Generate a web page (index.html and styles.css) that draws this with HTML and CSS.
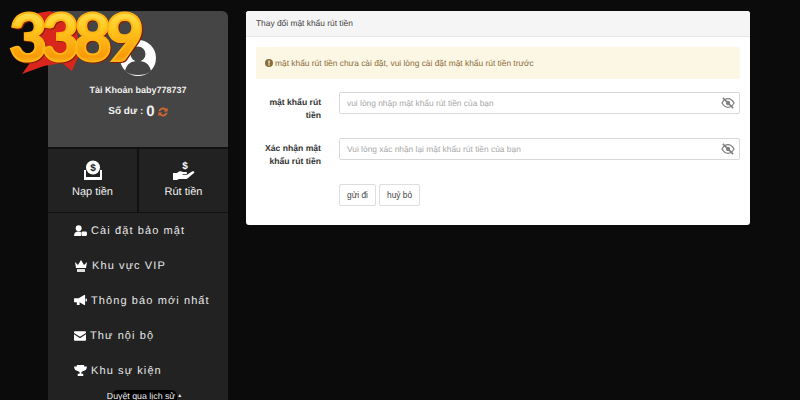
FILE: index.html
```html
<!DOCTYPE html>
<html lang="vi">
<head>
<meta charset="utf-8">
<title>Thay đổi mật khẩu rút tiền</title>
<link rel="stylesheet" href="styles.css">
</head>
<body>
<svg class="logo" viewBox="0 0 170 80" width="170" height="80" aria-hidden="true">
  <defs>
    <linearGradient id="gold" x1="0" y1="0" x2="0" y2="1">
      <stop offset="0" stop-color="#fff27a"/>
      <stop offset="0.4" stop-color="#ffc81e"/>
      <stop offset="0.75" stop-color="#f89a08"/>
      <stop offset="1" stop-color="#ffd94a"/>
    </linearGradient>
  </defs>
  <path d="M38 13 L50 11 L76 24 L80 52 L72 71 L62 63 L44 66 L22 74 L32 60 L40 30 Z" fill="#d8261c"/>
  <text x="9" y="61" class="logo-text" fill="url(#gold)">3389</text>
</svg>
<div class="page">
  <aside class="sidebar">
    <section class="profile">
      <svg class="avatar" viewBox="0 0 36 36" width="36" height="36" aria-hidden="true">
        <circle cx="18" cy="18" r="18" fill="#fff"/>
        <circle cx="18" cy="14" r="7.500" fill="#454545"/>
        <path d="M5 31 C7 23 12 21 18 21 C24 21 29 23 31 31 C27 34 23 35 18 35 C13 35 9 34 5 31 Z" fill="#454545"/>
      </svg>
      <p class="account">Tài Khoản baby778737</p>
      <p class="balance">Số dư : <strong class="amount">0</strong>
        <svg class="refresh" viewBox="0 0 12 12" width="10" height="10" aria-hidden="true">
          <path d="M0.500 5 A5.500 5.500 0 0 1 9.800 2.400 L11.500 0.800 V5.500 H6.800 L8.400 3.900 A3.500 3.500 0 0 0 2.600 5 Z M11.500 7 A5.500 5.500 0 0 1 2.200 9.600 L0.500 11.200 V6.500 H5.200 L3.600 8.100 A3.500 3.500 0 0 0 9.400 7 Z" fill="#d9682a"/>
        </svg>
      </p>
    </section>
    <nav class="cash">
      <a class="cash-btn">
        <svg viewBox="0 0 20 20" width="20" height="20" aria-hidden="true">
          <circle cx="10" cy="7.500" r="7" fill="#fff"/>
          <path d="M1 10 H3 V17 H17 V10 H19 V20 H1 Z" fill="#fff"/>
          <rect x="3" y="17" width="14" height="3" fill="#fff"/>
          <text x="10" y="11" text-anchor="middle" class="dollar">$</text>
        </svg>
        <span>Nạp tiền</span>
      </a>
      <a class="cash-btn">
        <svg viewBox="0 0 22 20" width="22" height="20" aria-hidden="true">
          <text x="12" y="9" text-anchor="middle" class="dollar-light">$</text>
          <path d="M0 13 H4 C6 11 8 11 10 12 H13 C14.500 12 14.500 14 13 14 H9.500 V14.800 H14 L19 11.500 C21 10.500 22 12 21 13 L15 18 C14 19 13 19 12 19 H6 L4 20 H0 Z" fill="#fff"/>
        </svg>
        <span>Rút tiền</span>
      </a>
    </nav>
    <ul class="menu">
      <li class="menu-item">
        <svg viewBox="0 0 14 12" width="13" height="11" aria-hidden="true"><circle cx="5" cy="3.500" r="3.200" fill="#fff"/><path d="M0 12 C0 8 2 7 5 7 C6 7 7 7.200 7.500 7.500 V12 Z" fill="#fff"/><rect x="8" y="7" width="6" height="5" rx="1.500" fill="#fff"/></svg>
        <span>Cài đặt bảo mật</span>
      </li>
      <li class="menu-item">
        <svg viewBox="0 0 14 12" width="14" height="12" aria-hidden="true"><path d="M1 2 L4 5 L7 0 L10 5 L13 2 L12 8 H2 Z" fill="#fff"/><rect x="3" y="9" width="8" height="3" fill="#ddd"/></svg>
        <span>Khu vực VIP</span>
      </li>
      <li class="menu-item">
        <svg viewBox="0 0 14 12" width="13" height="11" aria-hidden="true"><path d="M0 3.500 H5 L11 0 H12 V11 H11 L6 8 V11 H3 V8 H0 Z" fill="#fff"/><rect x="12.500" y="4" width="1.500" height="3" fill="#fff"/></svg>
        <span>Thông báo mới nhất</span>
      </li>
      <li class="menu-item">
        <svg viewBox="0 0 14 11" width="12" height="10" aria-hidden="true"><path d="M0 1 Q0 0 1 0 H13 Q14 0 14 1 V2 L7 6.500 L0 2 Z M0 3.500 L7 8 L14 3.500 V10 Q14 11 13 11 H1 Q0 11 0 10 Z" fill="#fff"/></svg>
        <span>Thư nội bộ</span>
      </li>
      <li class="menu-item">
        <svg viewBox="0 0 14 12" width="13" height="11" aria-hidden="true"><path d="M3 0 H11 V1.500 H14 C14 4.500 12.500 6 10 6.500 L8 7.500 V9.500 H10 V12 H4 V9.500 H6 V7.500 L4 6.500 C1.500 6 0 4.500 0 1.500 H3 Z" fill="#fff"/></svg>
        <span>Khu sự kiện</span>
      </li>
    </ul>
    <div class="tooltip">Duyệt qua lịch sử <span class="tip-mark">▲</span></div>
  </aside>
  <main class="panel">
    <header class="panel-head">Thay đổi mật khẩu rút tiền</header>
    <div class="panel-body">
      <div class="alert">
        <svg viewBox="0 0 10 10" width="8" height="8" aria-hidden="true"><circle cx="5" cy="5" r="5" fill="#8a6d3b"/><rect x="4.200" y="2" width="1.600" height="3.800" fill="#fcf8e3"/><rect x="4.200" y="6.600" width="1.600" height="1.500" fill="#fcf8e3"/></svg>
        <span>mật khẩu rút tiền chưa cài đặt, vui lòng cài đặt mật khẩu rút tiền trước</span>
      </div>
      <form class="form">
        <div class="row">
          <label class="label">mật khẩu rút tiền</label>
          <div class="field">
            <span class="placeholder">vui lòng nhập mật khẩu rút tiền của bạn</span>
            <svg class="eye" viewBox="0 0 16 14" width="14" height="12" aria-hidden="true"><path d="M1 7 C3 3.500 5.500 2 8 2 C10.500 2 13 3.500 15 7 C13 10.500 10.500 12 8 12 C5.500 12 3 10.500 1 7 Z" fill="none" stroke="#808080" stroke-width="1.500"/><circle cx="8" cy="7" r="2.500" fill="#808080"/><path d="M2 1 L14 13" stroke="#808080" stroke-width="1.800"/></svg>
          </div>
        </div>
        <div class="row">
          <label class="label">Xác nhận mật khẩu rút tiền</label>
          <div class="field">
            <span class="placeholder">Vui lòng xác nhận lại mật khẩu rút tiền của bạn</span>
            <svg class="eye" viewBox="0 0 16 14" width="14" height="12" aria-hidden="true"><path d="M1 7 C3 3.500 5.500 2 8 2 C10.500 2 13 3.500 15 7 C13 10.500 10.500 12 8 12 C5.500 12 3 10.500 1 7 Z" fill="none" stroke="#808080" stroke-width="1.500"/><circle cx="8" cy="7" r="2.500" fill="#808080"/><path d="M2 1 L14 13" stroke="#808080" stroke-width="1.800"/></svg>
          </div>
        </div>
        <div class="actions">
          <button type="button" class="btn">gửi đi</button>
          <button type="button" class="btn">huỷ bỏ</button>
        </div>
      </form>
    </div>
  </main>
</div>
</body>
</html>
```
FILE: styles.css
```css
* { box-sizing: border-box; }
html, body { margin: 0; height: 400px; overflow: hidden; }
body {
  background: #0b0b0b;
  font-family: "Liberation Sans", Arial, sans-serif;
  color: #fff;
  position: relative;
  text-rendering: geometricPrecision;
}
p { margin: 0; }
ul { margin: 0; padding: 0; list-style: none; }

.logo { position: absolute; left: 0; top: 0; z-index: 3; }
.logo-text {
  font-family: Lato, sans-serif;
  font-weight: 900;
  font-size: 66px;
  letter-spacing: -6px;
  stroke: #ffb514;
  stroke-width: 2px;
  filter: drop-shadow(1px 1px 0 #8a1a08);
}

.page { display: flex; align-items: flex-start; gap: 18px; padding: 11px 0 0 48px; }

.sidebar { width: 180px; flex: none; background: #222; border-radius: 6px 6px 0 0; position: relative; height: 400px; }
.profile {
  height: 136px; background: #454545; border-radius: 6px 6px 0 0;
  display: flex; flex-direction: column; align-items: center; padding-top: 29px;
}
.avatar { display: block; margin-bottom: 8px; }
.account { font-size: 9px; font-weight: 700; line-height: 12px; color: #f0f0f0; }
.balance { font-size: 10px; font-weight: 700; margin-top: 7px; line-height: 18px; display: flex; align-items: center; gap: 3px; color: #f0f0f0; }
.amount { font-size: 15px; font-weight: 700; }

.cash { display: flex; height: 66px; border-top: 2px solid #111; border-bottom: 1px solid #111; }
.cash-btn { flex: 1; display: flex; flex-direction: column; align-items: center; justify-content: center; gap: 6px; font-size: 11px; line-height: 13px; color: #f2f2f2; padding-bottom: 2px; }
.cash-btn + .cash-btn { border-left: 2px solid #111; }
.dollar { font: 700 10px "Liberation Sans", sans-serif; fill: #222; }
.dollar-light { font: 700 10px "Liberation Sans", sans-serif; fill: #fff; }

.menu { padding: 0 0 0 26px; }
.menu-item { height: 35px; display: flex; align-items: center; gap: 4px; font-size: 11px; letter-spacing: 1.100px; color: #e8e8e8; }
.menu-item svg { flex: none; }

.tooltip {
  position: absolute; left: 64px; top: 379px; width: 65px; height: 20px;
  background: #000; border-radius: 6px; font-size: 8.800px; line-height: 12px;
  display: flex; justify-content: center; align-items: flex-start; gap: 2px;
  white-space: nowrap; color: #eee;
}
.tip-mark { font-size: 5px; }

.panel { width: 504px; height: 214px; flex: none; background: #fff; border-radius: 3px; color: #444; overflow: hidden; }
.panel-head { height: 26px; background: #f5f5f5; border-bottom: 1px solid #e6e6e6; padding: 0 10px; font-size: 8.400px; line-height: 25px; color: #444; }
.panel-body { padding: 10px 10px 0; }
.alert {
  height: 32px; background: #fcf6e4; border-radius: 2px; padding: 0 10px 0 9px;
  display: flex; align-items: center; gap: 2px; font-size: 8.400px; color: #8a6d3b;
}
.form { display: flex; flex-direction: column; margin-top: 13px; }
.row { display: flex; align-items: flex-start; gap: 18px; height: 46px; }
.label { width: 65px; flex: none; text-align: right; font-size: 8.600px; font-weight: 700; line-height: 13px; padding-top: 4px; color: #333; }
.field {
  flex: 1; height: 22px; border: 1px solid #d8d8d8; border-radius: 2px; background: #fff;
  display: flex; align-items: center; justify-content: space-between; padding: 0 4px 0 7px;
}
.placeholder { font-size: 8.400px; color: #a8a8a8; }
.eye { flex: none; }
.actions { display: flex; gap: 3px; padding-left: 83px; }
.btn {
  height: 22px; padding: 0 7px; background: #fff; border: 1px solid #ddd; border-radius: 2px;
  font: 8.400px "Liberation Sans", sans-serif; color: #444;
}
```
